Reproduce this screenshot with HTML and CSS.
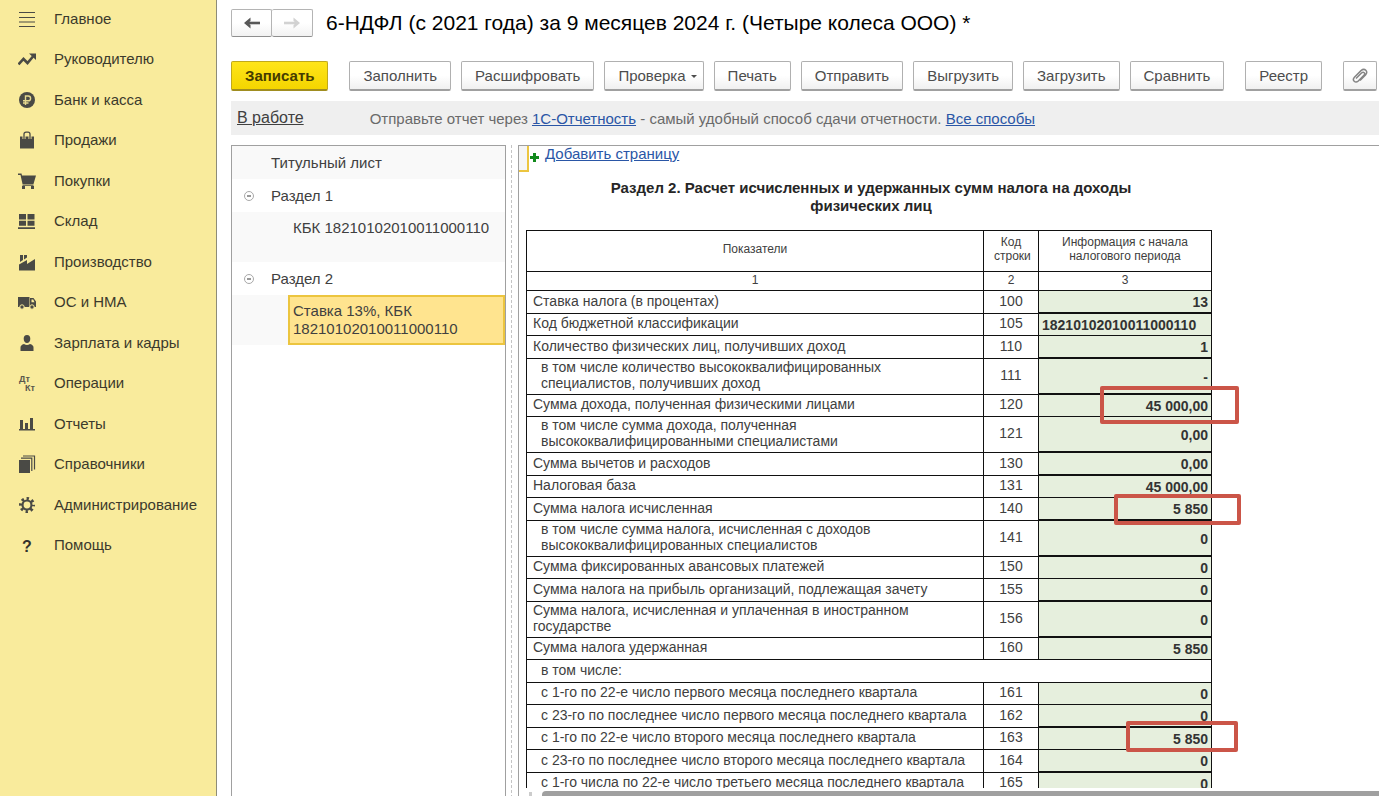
FILE: index.html
```html
<!DOCTYPE html>
<html lang="ru">
<head>
<meta charset="utf-8">
<title>6-НДФЛ (с 2021 года) за 9 месяцев 2024 г.</title>
<link rel="stylesheet" href="styles.css">
</head>
<body>
<div class="app">
  <nav class="sidebar" aria-label="Разделы">
    <ul class="menu">
      <li><a href="#"><svg class="icon" viewBox="0 0 18 18"><path d="M1 2.500h16M1 7.500h16M1 12h16M1 16.500h16" stroke="#4a4a45" stroke-width="1.200"/></svg>Главное</a></li>
      <li><a href="#"><svg class="icon" viewBox="0 0 18 18"><path d="M0.500 14.500L5.500 9l4 4L15 6.500" fill="none" stroke="#4a4a45" stroke-width="2.600"/><path d="M11 3.500h7V10z" fill="#4a4a45"/></svg>Руководителю</a></li>
      <li><a href="#"><svg class="icon" viewBox="0 0 18 18"><circle cx="9" cy="9" r="8" fill="#4a4a45"/><path d="M7.500 14V5h2.700a2.300 2.300 0 0 1 0 4.800H5M5 12h5.500" fill="none" stroke="#e6d98f" stroke-width="1.400"/></svg>Банк и касса</a></li>
      <li><a href="#"><svg class="icon" viewBox="0 0 18 18"><path d="M2 5.500h14V17.500H2z" fill="#4a4a45"/><path d="M6 8V3.200Q6 1.200 8 1.200h2q2 0 2 2V8" fill="none" stroke="#f9eb9c" stroke-width="3"/><path d="M6 8V3.200Q6 1.200 8 1.200h2q2 0 2 2V8" fill="none" stroke="#4a4a45" stroke-width="1.300"/></svg>Продажи</a></li>
      <li><a href="#"><svg class="icon" viewBox="0 0 18 18"><path d="M0 1.500h3.500L4 3.500h14L15.500 12H4.500L2.500 3H0zM4.500 12.500h11v1.300h-11zM4 14h3v3H4zM13 14h3v3h-3z" fill="#4a4a45"/></svg>Покупки</a></li>
      <li><a href="#"><svg class="icon" viewBox="0 0 18 18"><path d="M1 2h7v5.500H1zM9.500 2h7v5.500h-7zM1 8.700h7v5H1zM9.500 8.700h7v5h-7zM0 15.200h17v1.800H0z" fill="#4a4a45"/></svg>Склад</a></li>
      <li><a href="#"><svg class="icon" viewBox="0 0 18 18"><path d="M1 17.500V11.500l8-4.500v4l8-5v11.500zM2 2h3v5L2 9zM6 2h3v2.500L6 6.500z" fill="#4a4a45"/></svg>Производство</a></li>
      <li><a href="#"><svg class="icon" viewBox="0 0 18 18"><path d="M0 4h11.500v10H0zM12 5h3.500L18 8.500V14h-6z" fill="#4a4a45"/><path d="M13.500 6.500h1.700l1.300 2.800h-3z" fill="#f9eb9c"/><circle cx="4" cy="14" r="2.200" fill="#4a4a45" stroke="#f9eb9c"/><circle cx="14" cy="14" r="2.200" fill="#4a4a45" stroke="#f9eb9c"/></svg>ОС и НМА</a></li>
      <li><a href="#"><svg class="icon" viewBox="0 0 18 18"><path d="M9 1c2.300 0 3.300 1.600 3.300 3.700C12.300 7 11 9 9 9S5.700 7 5.700 4.700C5.700 2.600 6.700 1 9 1zM2.500 17v-3.500Q2.500 11 6 10q3 1.800 6 0 3.500 1 3.500 3.500V17z" fill="#4a4a45"/></svg>Зарплата и кадры</a></li>
      <li><a href="#"><svg class="icon" viewBox="0 0 18 18"><text x="1" y="8" class="glyph-small">Дт</text><text x="7" y="17" class="glyph-small">Кт</text></svg>Операции</a></li>
      <li><a href="#"><svg class="icon" viewBox="0 0 18 18"><path d="M2 5h3v9H2zM7 8h3v6H7zM12 3h3v11h-3zM1 14h16v1.500H1z" fill="#4a4a45"/></svg>Отчеты</a></li>
      <li><a href="#"><svg class="icon" viewBox="0 0 18 18"><path d="M1 5h11v13H1z" fill="#4a4a45"/><path d="M3 3.200h10.800V16M5 1h11.500v13.500" fill="none" stroke="#4a4a45" stroke-width="1.200"/></svg>Справочники</a></li>
      <li><a href="#"><svg class="icon" viewBox="0 0 18 18"><circle cx="9" cy="9" r="6.500" fill="none" stroke="#4a4a45" stroke-width="3" stroke-dasharray="2.400 2.705" stroke-dashoffset="1.200"/><circle cx="9" cy="9" r="4.500" fill="none" stroke="#4a4a45" stroke-width="2.200"/></svg>Администрирование</a></li>
      <li><a href="#"><svg class="icon" viewBox="0 0 18 18"><text x="4" y="16" class="glyph-large">?</text></svg>Помощь</a></li>
    </ul>
  </nav>

  <main class="work">
    <header class="title-row">
      <div class="history">
        <button type="button" aria-label="Назад"><svg width="18" height="12" viewBox="0 0 18 12"><path d="M3 6H17" fill="none" stroke="#585858" stroke-width="2.600"/><path d="M7.500 0.500L1 6l6.500 5.500V8L5 6l2.500-2z" fill="#585858"/></svg></button>
        <button type="button" aria-label="Вперед"><svg width="18" height="12" viewBox="0 0 18 12"><path d="M1 6h14" fill="none" stroke="#d2d2d2" stroke-width="2.600"/><path d="M10.500 0.500L17 6l-6.500 5.500V8L13 6l-2.500-2z" fill="#d2d2d2"/></svg></button>
      </div>
      <h1>6-НДФЛ (с 2021 года) за 9 месяцев 2024 г. (Четыре колеса ООО) *</h1>
    </header>

    <div class="toolbar">
      <button type="button" class="btn primary">Записать</button>
      <button type="button" class="btn group-start">Заполнить</button>
      <button type="button" class="btn">Расшифровать</button>
      <button type="button" class="btn">Проверка<span class="caret"></span></button>
      <button type="button" class="btn">Печать</button>
      <button type="button" class="btn">Отправить</button>
      <button type="button" class="btn">Выгрузить</button>
      <button type="button" class="btn">Загрузить</button>
      <button type="button" class="btn">Сравнить</button>
      <button type="button" class="btn group-start">Реестр</button>
      <button type="button" class="btn clip group-start" aria-label="Файлы"><svg width="16" height="16" viewBox="0 0 16 16"><path d="M4 10.500L9.500 5q1.600-1.400 2.700-.3t-.3 2.700L6.300 13q-2.300 2-4.100.2t.2-4L9 2.600q2.800-2.300 4.800-.3t-.3 4.800L8 12.500" fill="none" stroke="#858585" stroke-width="1.500"/></svg></button>
    </div>

    <div class="status">
      <a href="#" class="state">В работе</a>
      <p>Отправьте отчет через <a href="#">1С-Отчетность</a> - самый удобный способ сдачи отчетности. <a href="#">Все способы</a></p>
    </div>

    <div class="panes">
      <ul class="tree">
        <li class="node shaded">Титульный лист</li>
        <li class="node"><span class="toggle"></span>Раздел 1</li>
        <li class="leaf shaded"><span class="leaf-text">КБК 18210102010011000110</span></li>
        <li class="node"><span class="toggle"></span>Раздел 2</li>
        <li class="leaf shaded"><span class="leaf-text selected">Ставка 13%, КБК 18210102010011000110</span></li>
      </ul>
      <div class="splitter"></div>
      <section class="sheet">
        <div class="sheet-view">
          <div class="add-row"><span class="marker"></span><span class="plus"></span><a href="#">Добавить страницу</a></div>
          <h2>Раздел 2. Расчет исчисленных и удержанных сумм налога на доходы физических лиц</h2>
          <table class="report">
            <colgroup><col class="c-name"><col class="c-code"><col class="c-value"></colgroup>
            <thead>
              <tr class="head"><th>Показатели</th><th>Код строки</th><th>Информация с начала налогового периода</th></tr>
              <tr class="nums"><th>1</th><th>2</th><th>3</th></tr>
            </thead>
            <tbody>
              <tr class="thick"><td>Ставка налога (в процентах)</td><td>100</td><td>13</td></tr>
              <tr><td>Код бюджетной классификации</td><td>105</td><td class="left">18210102010011000110</td></tr>
              <tr class="thick"><td>Количество физических лиц, получивших доход</td><td>110</td><td>1</td></tr>
              <tr class="tall sub"><td>в том числе количество высококвалифицированных<br>специалистов, получивших доход</td><td>111</td><td>-</td></tr>
              <tr><td>Сумма дохода, полученная физическими лицами</td><td>120</td><td>45 000,00<span class="mark mark-wide"></span></td></tr>
              <tr class="tall sub"><td>в том числе сумма дохода, полученная<br>высококвалифицированными специалистами</td><td>121</td><td>0,00</td></tr>
              <tr class="thick"><td>Сумма вычетов и расходов</td><td>130</td><td>0,00</td></tr>
              <tr><td>Налоговая база</td><td>131</td><td>45 000,00</td></tr>
              <tr class="thick"><td>Сумма налога исчисленная</td><td>140</td><td>5 850<span class="mark mark-mid"></span></td></tr>
              <tr class="tall sub"><td>в том числе сумма налога, исчисленная с доходов<br>высококвалифицированных специалистов</td><td>141</td><td>0</td></tr>
              <tr><td>Сумма фиксированных авансовых платежей</td><td>150</td><td>0</td></tr>
              <tr class="thick"><td>Сумма налога на прибыль организаций, подлежащая зачету</td><td>155</td><td>0</td></tr>
              <tr class="tall"><td>Сумма налога, исчисленная и уплаченная в иностранном<br>государстве</td><td>156</td><td>0</td></tr>
              <tr><td>Сумма налога удержанная</td><td>160</td><td>5 850</td></tr>
              <tr class="thick sub"><td colspan="3">в том числе:</td></tr>
              <tr class="sub"><td>с 1-го по 22-е число первого месяца последнего квартала</td><td>161</td><td>0</td></tr>
              <tr class="thick sub"><td>с 23-го по последнее число первого месяца последнего квартала</td><td>162</td><td>0</td></tr>
              <tr class="sub"><td>с 1-го по 22-е число второго месяца последнего квартала</td><td>163</td><td>5 850<span class="mark mark-low"></span></td></tr>
              <tr class="thick sub"><td>с 23-го по последнее число второго месяца последнего квартала</td><td>164</td><td>0</td></tr>
              <tr class="sub"><td>с 1-го числа по 22-е число третьего месяца последнего квартала</td><td>165</td><td>0</td></tr>
            </tbody>
          </table>
        </div>
        <div class="scroll"><span class="arrow"></span><span class="thumb"></span></div>
      </section>
    </div>
  </main>
</div>
</body>
</html>
```
FILE: styles.css
```css
* { box-sizing: border-box; }

body {
  margin: 0;
  font-family: "Liberation Sans", Arial, sans-serif;
  font-size: 15px;
  color: #404040;
  background: #fff;
}

ul { list-style: none; margin: 0; padding: 0; }
a { color: #2a56a6; }

.app { display: flex; height: 100vh; overflow: hidden; }

.sidebar {
  flex: 0 0 217px;
  background: #f9eb9c;
  border-right: 1px solid #8e8c78;
}
.menu li { height: 40px; }
.menu li:nth-child(even) { height: 41px; }
.menu a {
  display: flex;
  align-items: center;
  gap: 18px;
  height: 37px;
  padding-left: 18px;
  color: #3c3a2c;
  text-decoration: none;
}
.icon { flex: none; width: 18px; height: 18px; }
.glyph-small { font-size: 9px; font-weight: bold; fill: #5a584c; }
.glyph-large { font-size: 16px; font-weight: bold; fill: #33322c; }

.work {
  flex: 1;
  min-width: 0;
  display: flex;
  flex-direction: column;
  padding-left: 14px;
}

.title-row { display: flex; align-items: center; gap: 13px; padding-top: 9px; }
.history { display: flex; }
.history button {
  display: flex;
  align-items: center;
  justify-content: center;
  width: 41px;
  height: 28px;
  padding: 0;
  background: linear-gradient(#fff 50%, #f2f2f2);
  border: 1px solid #b4b4b4;
  border-bottom-color: #8f8f8f;
  border-radius: 2px;
}
.history button + button { border-left: 0; }
h1 { margin: 0; font-size: 21px; font-weight: normal; line-height: 28px; color: #000; white-space: nowrap; }

.toolbar { display: flex; gap: 10px; padding-top: 24px; }
.btn {
  flex: none;
  display: flex;
  align-items: center;
  justify-content: center;
  height: 30px;
  padding: 0 13px;
  font-family: inherit;
  font-size: 15px;
  color: #4d4d4d;
  background: linear-gradient(#fff 50%, #f0f0f0);
  border: 1px solid #b0b0b0;
  border-bottom: 2px solid #a0a0a0;
  border-radius: 2px;
}
.primary {
  font-weight: bold;
  color: #453c00;
  background: linear-gradient(#ffe51a, #f4d500);
  border-color: #c0a91c;
  border-bottom-color: #a08d20;
}
.group-start { margin-left: 11px; }
.caret {
  margin: 2px -7px 0 5px;
  border: 3px solid transparent;
  border-top-color: #4d4d4d;
  border-bottom: 0;
}
.clip { width: 34px; padding: 0; }

.status {
  display: flex;
  align-items: center;
  gap: 66px;
  height: 34px;
  margin-top: 10px;
  padding-left: 6px;
  background: #efefef;
  color: #6a6a6a;
  white-space: nowrap;
}
.status p { margin: 0; }
.state { font-size: 16px; color: #404040; }

.panes { flex: 1; min-height: 0; display: flex; margin-top: 10px; }

.tree { flex: 0 0 275px; border: 1px solid #a0a0a0; border-bottom: 0; }
.shaded { background: #f9f9f9; }
.node {
  display: flex;
  align-items: center;
  position: relative;
  height: 33px;
  padding-left: 39px;
}
.toggle {
  position: absolute;
  left: 12px;
  width: 10px;
  height: 10px;
  border: 1px solid #a8a8a8;
  border-radius: 50%;
  background: linear-gradient(#999, #999) center / 4px 2px no-repeat;
}
.leaf { padding-left: 56px; }
.leaf-text {
  display: block;
  height: 50px;
  padding: 5px 3px;
  line-height: 18px;
  border: 2px solid transparent;
}
.selected { background: #ffe48f; border-color: #ecc53f; }

.splitter { flex: 0 0 12px; background: repeating-linear-gradient(#c4c4c4 0 3px, transparent 3px 5px) 5px 0 / 1px 100% no-repeat; }

.sheet {
  flex: 1;
  min-width: 0;
  display: flex;
  flex-direction: column;
  border-top: 1px solid #a0a0a0;
  border-left: 1px solid #a0a0a0;
}
.sheet-view { flex: 1; min-height: 0; overflow: hidden; padding-left: 7px; }
.add-row { position: relative; height: 33px; padding-left: 19px; line-height: 15px; }
.marker {
  position: absolute;
  left: -7px;
  top: 0;
  width: 10px;
  height: 26px;
  border-right: 2px solid #ecc53f;
  border-bottom: 2px solid #ecc53f;
  background: #f5f5f5;
}
.plus {
  position: absolute;
  left: 4px;
  top: 7px;
  width: 9px;
  height: 9px;
  background:
    linear-gradient(#118a1c, #118a1c) center / 9px 3px no-repeat,
    linear-gradient(#118a1c, #118a1c) center / 3px 9px no-repeat;
}
h2 {
  width: 560px;
  margin: 0 0 15px 65px;
  font-size: 15px;
  line-height: 18px;
  text-align: center;
  color: #262626;
}

.report {
  table-layout: fixed;
  width: 686px;
  border-collapse: separate;
  border-spacing: 0;
  border-top: 1px solid #111;
  border-left: 1px solid #111;
  font-size: 14px;
  line-height: 16px;
}
.c-name { width: 457px; }
.c-code { width: 55px; }
.c-value { width: 173px; }
.report th, .report td {
  height: 22px;
  padding: 0 3px 3px;
  border-right: 1px solid #111;
  border-bottom: 1px solid #111;
  text-align: center;
}
.report th { font-size: 12px; line-height: 14px; font-weight: normal; }
.report .head th { height: 41px; padding: 0 10px 4px; }
.report .nums th { height: 19px; }
.report td:first-child { padding-left: 6px; text-align: left; }
.report .sub td:first-child { padding-left: 14px; }
.report td:nth-child(3) {
  position: relative;
  padding-bottom: 0;
  background: #e6efdd;
  text-align: right;
  font-weight: bold;
  color: #333;
}
.report td.left { text-align: left; }
.report .thick td { height: 23px; }
.report .tall td { height: 36px; }
.report .thick td:nth-child(3), .report .tall td:nth-child(3) { box-shadow: inset 0 -1px #111; }

.mark {
  position: absolute;
  z-index: 1;
  border: 4px solid #cb5548;
  border-radius: 2px;
}
.mark-wide { top: -9px; right: -28px; width: 139px; height: 38px; }
.mark-mid { top: -4px; right: -30px; width: 127px; height: 31px; }
.mark-low { top: -7px; right: -27px; width: 112px; height: 31px; }

.scroll { display: flex; align-items: flex-end; height: 8px; padding-left: 8px; overflow: hidden; }
.arrow { width: 15px; height: 4px; background: linear-gradient(#ccc, #ccc) 2px 0 / 3px 4px no-repeat; }
.thumb { flex: 1; height: 5px; background: #a0a0a0; border-top-left-radius: 4px; }
```
